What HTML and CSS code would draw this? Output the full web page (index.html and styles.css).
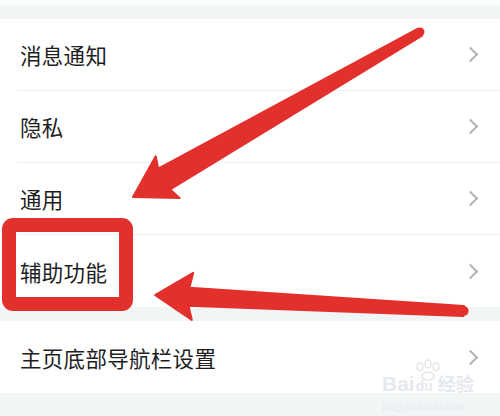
FILE: index.html
```html
<!DOCTYPE html>
<html lang="zh">
<head>
<meta charset="utf-8">
<link rel="stylesheet" href="styles.css">
</head>
<body>
<div class="page">
  <div class="top-white"></div>
  <div class="band band-top"></div>
  <div class="group">
    <div class="row"><span class="label">消息通知</span><span class="chev"></span></div>
    <div class="row"><span class="label">隐私</span><span class="chev"></span></div>
    <div class="row"><span class="label">通用</span><span class="chev"></span></div>
    <div class="row"><span class="label">辅助功能</span><span class="chev"></span></div>
  </div>
  <div class="band band-mid"></div>
  <div class="group">
    <div class="row"><span class="label">主页底部导航栏设置</span><span class="chev"></span></div>
  </div>
  <div class="band band-bottom"></div>

  <svg class="marks" width="500" height="416" viewBox="0 0 500 416">
    <g fill="#e2302d" stroke="#e2302d" stroke-width="2" stroke-linejoin="round">
      <polygon points="133,197 155.7,156.3 158.2,168.7 418,28.7 422,35.7 170.2,189.5 179.6,197.9"/>
      <circle cx="420" cy="32" r="4.5" stroke="none"/>
      <polygon points="155,295 193.2,272.9 189.4,287.8 463.9,306 463.3,316 188.5,305.7 191.8,319.9"/>
      <circle cx="463.6" cy="311" r="5" stroke="none"/>
    </g>
    <rect x="9" y="225" width="117" height="79" rx="4" ry="4" fill="none" stroke="#e2302d" stroke-width="14"/>
    <g fill="none" stroke="#e3e6e9" stroke-width="1.5">
      <ellipse cx="420" cy="367" rx="3" ry="4"/>
      <ellipse cx="428" cy="364" rx="3" ry="4"/>
      <ellipse cx="436" cy="367" rx="3" ry="4"/>
      <ellipse cx="428" cy="376" rx="6" ry="4"/>
    </g>
  </svg>

  <div class="watermark">
    <div class="wm-logo"><span>Bai</span><span class="wm-du">du</span><span class="wm-cn">经验</span></div>
    <div class="wm-url">jingyan.baidu.com</div>
  </div>
</div>
</body>
</html>
```

FILE: styles.css
```css
html, body {
  margin: 0;
  padding: 0;
  background: #ffffff;
}

.page {
  position: relative;
  width: 500px;
  height: 416px;
  overflow: hidden;
  font-family: "Noto Sans CJK SC", "Noto Sans", sans-serif;
  display: flex;
  flex-direction: column;
}

.top-white {
  height: 5px;
  background: #fbfcfc;
}

.band {
  background: #f2f5f6;
}

.band-top {
  height: 14px;
}

.band-mid {
  height: 14px;
}

.band-bottom {
  flex: 1;
}

.group {
  background: #ffffff;
  padding-left: 17px;
}

.row {
  height: 72px;
  box-sizing: border-box;
  display: flex;
  align-items: center;
  justify-content: space-between;
  padding-left: 3px;
  padding-right: 22px;
  border-bottom: 1px solid #efefef;
}

.row:last-child {
  border-bottom: none;
}

.label {
  font-size: 21.5px;
  color: #1e1e1e;
  letter-spacing: 0.3px;
}

.chev {
  width: 9px;
  height: 9px;
  border-top: 2px solid #b3b3b3;
  border-right: 2px solid #b3b3b3;
  transform: rotate(45deg);
  margin-right: 2px;
}

.marks {
  position: absolute;
  left: 0;
  top: 0;
}

.watermark {
  position: absolute;
  left: 382px;
  top: 372px;
  color: #e6e9ec;
  font-family: "Liberation Sans", sans-serif;
}

.wm-logo {
  font-size: 21px;
  font-weight: bold;
  line-height: 22px;
  display: flex;
  align-items: baseline;
}

.wm-du {
  font-size: 14px;
  margin-left: 1px;
}

.wm-cn {
  font-family: "Noto Sans CJK SC", sans-serif;
  font-size: 18px;
  margin-left: 5px;
}

.wm-url {
  font-size: 11px;
  line-height: 12px;
  margin-top: 3px;
  font-family: "Liberation Serif", serif;
}
```
